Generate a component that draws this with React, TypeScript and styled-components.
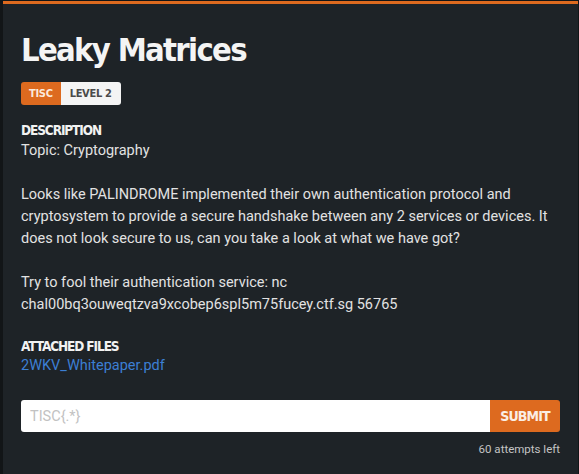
import React from "react";
import styled, { createGlobalStyle } from "styled-components";

const Global = createGlobalStyle`
  html, body { margin: 0; padding: 0; background: #121517; }
  body { width: 579px; height: 474px; overflow: hidden; }
  * { box-sizing: border-box; }
`;

const HEAD = `"DejaVu Sans Condensed", "Liberation Sans", sans-serif`;

const Backdrop = styled.div`
  width: 579px;
  height: 474px;
  padding: 1px 1px 0 3px;
  background: #121517;
`;

const Modal = styled.div`
  height: 100%;
  background: #1e2327;
  border-top: 3px solid #dd6a1f;
  padding: 26px 18px 0 18px;
  display: flex;
  flex-direction: column;
  color: #e4e4e4;
  font-family: Roboto, "Noto Sans", sans-serif;
`;

const Title = styled.h1`
  margin: 0;
  font-family: ${HEAD};
  font-weight: 700;
  font-size: 32.5px;
  line-height: 40px;
  letter-spacing: -1.7px;
  color: #f4f4f4;
`;

const Badges = styled.div`
  display: flex;
  margin-top: 12px;
`;

const Badge = styled.span<{ $accent?: boolean }>`
  display: inline-flex;
  align-items: center;
  height: 23px;
  padding: 0 ${(p) => (p.$accent ? 8 : 9)}px;
  font-family: ${HEAD};
  font-weight: 700;
  font-size: 11px;
  letter-spacing: -0.3px;
  background: ${(p) => (p.$accent ? "#dd6a1f" : "#f4f4f4")};
  color: ${(p) => (p.$accent ? "#fbe9dc" : "#4a4a4a")};
  border-radius: ${(p) => (p.$accent ? "3px 0 0 3px" : "0 3px 3px 0")};
`;

const SectionLabel = styled.div<{ $top: number }>`
  margin-top: ${(p) => p.$top}px;
  font-family: ${HEAD};
  font-weight: 700;
  font-size: 13.5px;
  line-height: 18px;
  letter-spacing: -1.1px;
  color: #f2f2f2;
`;

const Body = styled.p`
  margin: 1px 0 0;
  font-size: 14.5px;
  line-height: 22px;
  color: #e2e2e2;
`;

const Link = styled.a`
  display: block;
  font-size: 14.5px;
  line-height: 22px;
  color: #3c7fd3;
  text-decoration: none;
`;

const Form = styled.form`
  display: flex;
  margin-top: 23px;
  height: 32px;
`;

const Input = styled.input`
  flex: 1;
  min-width: 0;
  height: 32px;
  border: none;
  border-radius: 3px 0 0 3px;
  padding: 0 9px;
  font-family: Roboto, sans-serif;
  font-size: 14.5px;
  background: #fff;
  outline: none;
  &::placeholder { color: #c2c2c2; }
`;

const Submit = styled.button`
  width: 70px;
  height: 32px;
  border: none;
  border-radius: 0 3px 3px 0;
  background: #dd6a1f;
  color: #fbeee4;
  font-family: ${HEAD};
  font-weight: 700;
  font-size: 14px;
  letter-spacing: -0.9px;
  padding: 0;
`;

const Attempts = styled.div`
  margin-top: 10px;
  text-align: right;
  font-size: 11.5px;
  line-height: 14px;
  color: #c4c4c4;
`;

export default function App() {
  return (
    <>
      <Global />
      <Backdrop>
        <Modal>
          <Title>Leaky Matrices</Title>
          <Badges>
            <Badge $accent>TISC</Badge>
            <Badge>LEVEL 2</Badge>
          </Badges>
          <SectionLabel $top={16}>DESCRIPTION</SectionLabel>
          <Body>
            Topic: Cryptography
            <br />
            <br />
            Looks like PALINDROME implemented their own authentication protocol and cryptosystem to
            provide a secure handshake between any 2 services or devices. It does not look secure to
            us, can you take a look at what we have got?
            <br />
            <br />
            Try to fool their authentication service: nc chal00bq3ouweqtzva9xcobep6spl5m75fucey.ctf.sg
            56765
          </Body>
          <SectionLabel $top={21}>ATTACHED FILES</SectionLabel>
          <Link href="#">2WKV_Whitepaper.pdf</Link>
          <Form onSubmit={(e) => e.preventDefault()}>
            <Input placeholder="TISC{.*}" />
            <Submit type="submit">SUBMIT</Submit>
          </Form>
          <Attempts>60 attempts left</Attempts>
        </Modal>
      </Backdrop>
    </>
  );
}
